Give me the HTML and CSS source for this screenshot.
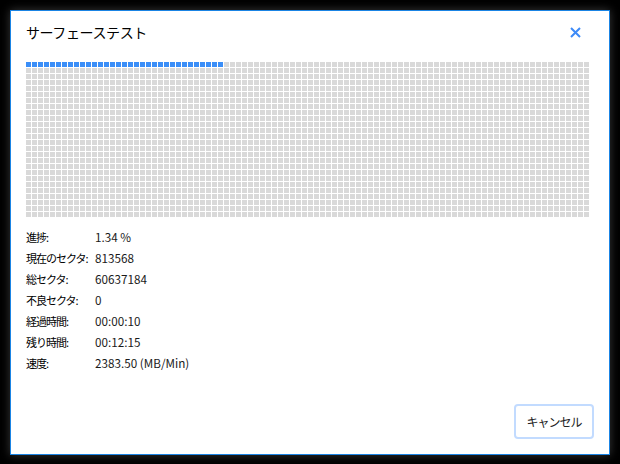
FILE: index.html
```html
<!DOCTYPE html>
<html lang="ja">

<head>
    <meta charset="UTF-8">
    <meta name="viewport" content="width=device-width, initial-scale=1.0">
    <title>サーフェーステスト</title>
    <link rel="stylesheet" href="styles.css">
</head>

<body>
    <div class="dialog">
        <div class="dialog-header">
            <span class="dialog-title">サーフェーステスト</span>
            <button class="close-btn" title="閉じる">
                <svg width="11" height="11" viewBox="0 0 11 11">
                    <path d="M1 1 L10 10 M10 1 L1 10" stroke="#3d8af7" stroke-width="2" fill="none" />
                </svg>
            </button>
        </div>

        <div class="block-map" id="blockMap"></div>

        <div class="stats">
            <div class="stat-row"><span class="stat-label">進捗:</span><span class="stat-value">1.34 %</span></div>
            <div class="stat-row"><span class="stat-label">現在のセクタ:</span><span class="stat-value">813568</span></div>
            <div class="stat-row"><span class="stat-label">総セクタ:</span><span class="stat-value">60637184</span></div>
            <div class="stat-row"><span class="stat-label">不良セクタ:</span><span class="stat-value">0</span></div>
            <div class="stat-row"><span class="stat-label">経過時間:</span><span class="stat-value">00:00:10</span></div>
            <div class="stat-row"><span class="stat-label">残り時間:</span><span class="stat-value">00:12:15</span></div>
            <div class="stat-row"><span class="stat-label">速度:</span><span class="stat-value">2383.50 (MB/Min)</span></div>
        </div>

        <div class="dialog-footer">
            <button class="btn-cancel">キャンセル</button>
        </div>
    </div>

    <script>
        // 94 x 26 blocks, first 33 already scanned
        var map = document.getElementById('blockMap');
        var total = 94 * 26;
        var done = 33;
        for (var i = 0; i < total; i++) {
            var cell = document.createElement('div');
            cell.className = i < done ? 'block done' : 'block';
            map.appendChild(cell);
        }
    </script>
</body>

</html>
```

FILE: styles.css
```css
body {
    font-family: "Noto Sans CJK JP", "Liberation Sans", sans-serif;
    margin: 0;
    padding: 10px;
    background-color: #000;
    width: 620px;
    height: 464px;
    box-sizing: border-box;
}

.dialog {
    display: flex;
    flex-direction: column;
    width: 600px;
    height: 445px;
    box-sizing: border-box;
    background-color: #fff;
    border: 1px solid #1a84e4;
    box-shadow: 0 0 9px rgba(70, 70, 70, 0.8);
    padding: 0 15px;
}

.dialog-header {
    display: flex;
    justify-content: space-between;
    align-items: center;
    height: 36px;
    padding-top: 3px;
    margin-bottom: 12px;
}

.dialog-title {
    font-size: 14px;
    color: #000;
    letter-spacing: -0.4px;
}

.close-btn {
    border: none;
    background: none;
    padding: 0;
    margin-right: 13px;
    width: 11px;
    height: 11px;
    display: flex;
    cursor: pointer;
}

.block-map {
    display: grid;
    grid-template-columns: repeat(94, 5px);
    grid-auto-rows: 5px;
    gap: 1px;
}

.block {
    background-color: #d9d9d9;
}

.block.done {
    background-color: #3a8ef8;
}

.stats {
    margin-top: 9px;
    font-size: 11px;
}

.stat-row {
    display: flex;
    height: 21px;
    align-items: center;
}

.stat-label {
    width: 69px;
    color: #000;
    letter-spacing: -1px;
}

.stat-value {
    color: #1a1a1a;
    font-size: 11.7px;
}

.dialog-footer {
    margin-top: auto;
    display: flex;
    justify-content: flex-end;
    padding-bottom: 15px;
}

.btn-cancel {
    font-family: "Noto Sans CJK JP", sans-serif;
    font-size: 12px;
    width: 80px;
    height: 35px;
    padding: 0;
    background-color: #fff;
    color: #222;
    border: 2px solid #c2dbff;
    border-radius: 4px;
    letter-spacing: -1px;
}
```
